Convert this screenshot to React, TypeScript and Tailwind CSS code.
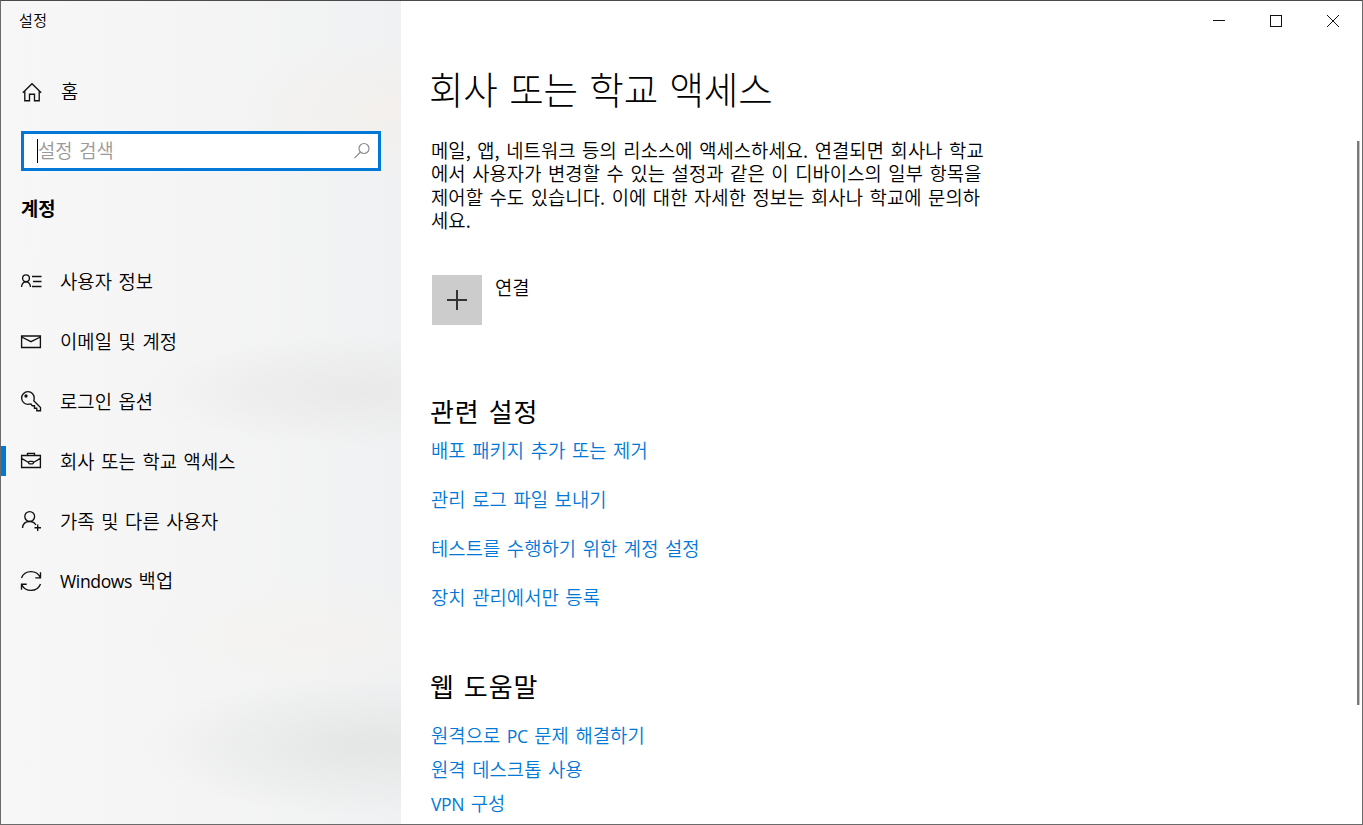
import type { ReactNode } from "react";

const Icon = ({ children }: { children: ReactNode }) => (
  <svg
    width="22"
    height="22"
    viewBox="0 0 22 22"
    fill="none"
    stroke="#111"
    strokeWidth="1.35"
    className="shrink-0"
  >
    {children}
  </svg>
);

const navItems = [
  {
    label: "사용자 정보",
    icon: (
      <Icon>
        <circle cx="6" cy="8.3" r="3.4" />
        <path d="M1.500 17c.3-3.200 2-5.200 4.500-5.200s4.200 2 4.500 5.200" />
        <path d="M12 6.500h9.500M13 11.500h8.500M12 16.500h9.500" />
      </Icon>
    ),
  },
  {
    label: "이메일 및 계정",
    icon: (
      <Icon>
        <path d="M1.600 6h18.800v11.500H1.600zM1.600 7l9.400 4.700L20.400 7" />
      </Icon>
    ),
  },
  {
    label: "로그인 옵션",
    icon: (
      <Icon>
        <path d="M9 14.200a6.300 6.300 0 1 1 5.200-5.600c0 .8-.2 1.500-.4 2.200l6.700 6.700v3.200h-3.700v-2.500h-2.300v-2.500h-2.200l-1.400-1.700z" />
        <circle cx="6" cy="6" r="1" fill="#111" />
      </Icon>
    ),
  },
  {
    label: "회사 또는 학교 액세스",
    selected: true,
    icon: (
      <Icon>
        <path d="M1.600 5.500h18.800v12H1.600zM7.500 5.500V3.300h7v2.200M1.600 8.300l7 4.200M20.400 8.300l-7 4.200" />
        <rect x="8.600" y="11.300" width="4.800" height="2.500" rx="1" />
      </Icon>
    ),
  },
  {
    label: "가족 및 다른 사용자",
    icon: (
      <Icon>
        <circle cx="9.700" cy="6.500" r="4.900" />
        <path d="M2.500 18c.3-4 3.200-6.500 7.200-6.500 2.800 0 5 1.300 6.200 3.500M17.700 14.500v6.500M14.500 17.700h6.500" />
      </Icon>
    ),
  },
  {
    label: (
      <>
        <Latin>Windows</Latin> 백업
      </>
    ),
    icon: (
      <Icon>
        <path d="M1.500 8C3 3.900 6.700 1.600 11 1.600c4 0 7.500 2.100 9.200 5.700M20.500 2.200v5.600h-5.200" />
        <path d="M20.500 14c-1.500 4.100-5.200 6.400-9.500 6.400-4 0-7.500-2.100-9.200-5.700M1.500 19.800v-5.600h5.200" />
      </Icon>
    ),
  },
];

const relatedLinks = [
  "배포 패키지 추가 또는 제거",
  "관리 로그 파일 보내기",
  "테스트를 수행하기 위한 계정 설정",
  "장치 관리에서만 등록",
];

function Latin({ children }: { children: ReactNode }) {
  return (
    <span className="font-['Open_Sans'] text-[17.600px] font-normal tracking-[-0.400px]">
      {children}
    </span>
  );
}

const Sidebar = () => (
  <aside className="flex w-[400px] shrink-0 flex-col bg-[#f5f5f5] bg-[radial-gradient(ellipse_150px_70px_at_380px_110px,#f3f0ed_0%,#f3f0ed00_100%),radial-gradient(ellipse_220px_55px_at_360px_390px,#e9e9e9_0%,#e9e9e900_100%),radial-gradient(ellipse_170px_60px_at_310px_635px,#f3f2f0_0%,#f3f2f000_100%),radial-gradient(ellipse_230px_70px_at_370px_745px,#e4e5e5_0%,#e4e5e500_100%),linear-gradient(to_right,#f7f7f7_0%,#f5f5f5_40%,#f0f1f2_100%)]">
    <div className="h-10 pl-[18px] text-[15px] leading-[38px] tracking-[0.500px]">
      설정
    </div>
    <div className="mt-[31px] flex h-10 items-center pl-5">
      <Icon>
        <path d="M1.800 11.700L11 2.700l9.200 9M3.800 10v9.700h4.700v-6.500h5v6.500h4.700V10" />
      </Icon>
      <span className="mb-[3px] ml-[18px]">홈</span>
    </div>
    <div className="mt-[19px] ml-5 flex h-10 w-[360px] items-center border-[3px] border-[#0078d7] bg-white pr-[7px] pl-[13px]">
      <span className="h-6 w-px bg-black" />
      <span className="mb-1 text-[#999]">설정 검색</span>
      <svg
        width="18"
        height="18"
        viewBox="0 0 18 18"
        fill="none"
        stroke="#8c8c8c"
        strokeWidth="1.2"
        className="ml-auto"
      >
        <circle cx="11" cy="6.500" r="5" />
        <path d="M7.500 10L1.500 16.200" />
      </svg>
    </div>
    <h2 className="mt-[23px] pl-5 leading-7 font-bold">계정</h2>
    <nav className="mt-[29px]">
      {navItems.map((item, i) => (
        <div key={i} className="flex h-[60px] items-center">
          <span
            className={
              item.selected ? "h-[30px] w-[5px] bg-[#0078d7]" : "w-[5px]"
            }
          />
          <span className="ml-[14px]">{item.icon}</span>
          <span className="mb-[2px] ml-[18px]">{item.label}</span>
        </div>
      ))}
    </nav>
  </aside>
);

const WindowButtons = () => (
  <svg
    width="172"
    height="40"
    viewBox="0 0 172 40"
    fill="none"
    stroke="#111"
    className="ml-auto shrink-0"
  >
    <path d="M23 19.500h12" />
    <rect x="80.500" y="14.500" width="11" height="11" />
    <path d="M137 14l12 12M149 14l-12 12" />
  </svg>
);

export default function App() {
  return (
    <div className="flex h-[825px] w-[1363px] overflow-hidden border border-[#6b6b6b] border-t-[#4a4a4a] bg-white font-['Noto_Sans_CJK_KR',sans-serif] text-[18.750px] leading-[23px] font-[350] tracking-[0.070px] text-black [word-spacing:2.300px]">
      <Sidebar />
      <main className="flex min-w-0 grow flex-col">
        <WindowButtons />
        <div className="flex grow pr-[2px] pl-[30px]">
          <div className="w-[570px]">
            <h1 className="mt-[19px] -ml-[2px] text-[37.500px] leading-[56px] font-light tracking-[-0.200px] [word-spacing:3.500px]">
              회사 또는 학교 액세스
            </h1>
            <p className="mt-[22px] leading-[23.300px] whitespace-nowrap">
              메일, 앱, 네트워크 등의 리소스에 액세스하세요. 연결되면 회사나 학교
              <br />
              에서 사용자가 변경할 수 있는 설정과 같은 이 디바이스의 일부 항목을
              <br />
              제어할 수도 있습니다. 이에 대한 자세한 정보는 회사나 학교에 문의하
              <br />
              세요.
            </p>
            <div className="mt-11 flex">
              <button className="ml-px flex size-[50px] items-center justify-center bg-[#ccc]">
                <svg width="20" height="20" stroke="#333" strokeWidth="2">
                  <path d="M0 10h20M10 0v20" />
                </svg>
              </button>
              <span className="ml-[13px]">연결</span>
            </div>
            <h2 className="mt-[69px] -ml-px text-[26px] leading-[34px] font-normal tracking-[0.900px]">
              관련 설정
            </h2>
            <div className="mt-[10px] flex flex-col gap-[26px] text-[#0078d7]">
              {relatedLinks.map((link) => (
                <a key={link}>{link}</a>
              ))}
            </div>
            <h2 className="mt-[61px] -ml-px text-[26px] leading-[34px] font-normal tracking-[0.900px]">
              웹 도움말
            </h2>
            <div className="mt-5 flex flex-col text-[#0078d7]">
              <a className="h-[34px]">
                원격으로 <Latin>PC</Latin> 문제 해결하기
              </a>
              <a className="h-[34px]">원격 데스크톱 사용</a>
              <a className="h-[34px]">
                <Latin>VPN</Latin> 구성
              </a>
            </div>
          </div>
          {/* Scrollbar thumb */}
          <div className="mt-[100px] ml-auto h-[564px] w-[3px] border-r border-[#c4c4c4] bg-[#7a7a7a]" />
        </div>
      </main>
    </div>
  );
}
